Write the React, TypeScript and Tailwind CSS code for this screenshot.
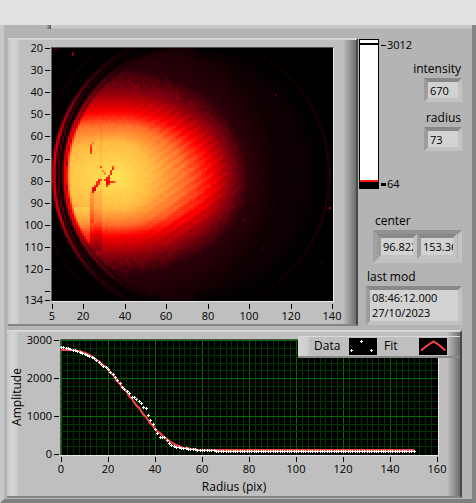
import { useEffect, useRef } from "react";

const COLS = 140;
const ROWS = 126;

const PALETTE: [number, number[]][] = [
  [0, [0, 0, 0]],
  [0.15, [44, 0, 8]],
  [0.3, [130, 0, 14]],
  [0.42, [205, 0, 4]],
  [0.5, [255, 0, 0]],
  [0.7, [255, 112, 42]],
  [0.88, [255, 188, 68]],
  [1, [255, 228, 84]],
];

// level, then the radius of its contour to the right, left, up and down
const CONTOURS = [
  [1, 0, 0, 0, 0],
  [0.88, 105, 190, 105, 90],
  [0.7, 205, 420, 157, 138],
  [0.5, 282, 600, 196, 172],
  [0.3, 345, 800, 262, 235],
  [0.15, 392, 950, 330, 290],
  [0.05, 480, 1300, 480, 420],
  [0.02, 660, 1900, 700, 640],
];

const DEFECTS: [number, number, number][] = [
  [19, 48, 0.68], [19, 49, 0.6], [19, 50, 0.58], [19, 51, 0.56], [19, 52, 0.62], [20, 47, 0.72],
  [24, 59, 0.62], [25, 61, 0.78], [26, 62, 0.78], [30, 59, 0.62], [30, 60, 0.55], [29, 61, 0.6],
  [29, 62, 0.58], [28, 63, 0.62], [27, 64, 0.55], [28, 64, 0.54], [26, 65, 0.62], [27, 65, 0.5],
  [28, 65, 0.56], [27, 66, 0.5], [28, 66, 0.5], [29, 66, 0.56], [30, 66, 0.6], [31, 66, 0.72],
  [27, 67, 0.5], [28, 67, 0.56], [27, 68, 0.62], [23, 65, 0.58], [24, 65, 0.62], [22, 66, 0.62],
  [23, 66, 0.55], [22, 67, 0.55], [23, 67, 0.64], [21, 68, 0.6], [22, 68, 0.52], [20, 69, 0.54],
  [21, 69, 0.47], [20, 70, 0.45], [21, 70, 0.48], [20, 71, 0.52],
  [10, 2, 0.32], [10, 3, 0.3], [1, 0, 0.15], [2, 0, 0.14], [3, 0, 0.12], [1, 1, 0.1],
  [111, 23, 0.22], [138, 79, 0.38], [104, 99, 0.2], [134, 106, 0.17], [95, 85, 0.24],
  [110, 77, 0.14], [130, 121, 0.1],
];

function noise(x: number, y: number) {
  const n = Math.sin(x * 127.1 + y * 311.7) * 43758.5453;
  return n - Math.floor(n) - 0.5;
}

function ring(rho: number, at: number, width: number) {
  return Math.exp(-(((rho - at) / width) ** 2));
}

function beam(x: number, y: number) {
  const dx = x - 200;
  const dy = y - 395;
  const d = Math.hypot(dx, dy) || 1;
  const c = dx / d;
  const s = dy / d;
  let prev = 0;
  for (let i = 1; i < CONTOURS.length; i++) {
    const [level, right, left, up, down] = CONTOURS[i];
    const a = dx > 0 ? right : left;
    const b = dy > 0 ? down : up;
    const r = 1 / Math.hypot(c / a, s / b);
    if (d < r) {
      const before = CONTOURS[i - 1][0];
      return before + ((level - before) * (d - prev)) / (r - prev);
    }
    prev = r;
  }
  return 0.02;
}

function intensity(col: number, row: number) {
  const x = col * 6 + 9;
  const y = row * 6 + 9;
  const rho = Math.hypot((x - 430) / 380, (y - 385) / 385);
  const side = (430 - x) / 380;
  const height = Math.abs(y - 385) / 385;
  let v: number;

  if (rho < 1) {
    v = beam(x, y);
    const stripe = Math.sin((x * 0.58 + y * 0.82) / 3.6);
    if (x > 250 && v > 0.35) v += stripe * 0.024 * Math.min(1, (x - 250) / 120);
    if (v < 0.28) v += (noise(col, row) + noise(col >> 1, row >> 1)) * 0.14 * v;
    else v += noise(col, row) * 0.022;
    if (x < 122 && y > 480 && y < 590) v += 0.08;
    if (y > 430 && y < 610) {
      if (x > 122 && x < 134) v -= y > 530 ? 0.05 : 0.12;
      else if (x >= 134 && x < 155) v -= y > 530 ? 0.07 : 0.05;
    }
    if (x > 150 && x < 157 && y > 240 && y < 440) v -= 0.03;
    v *= Math.min(1, 0.55 + (1 - rho) * 18);
    if (side < 0) v *= Math.min(1, (1.02 - rho) * 7);
  } else {
    const left = Math.max(0, Math.min(1, side * 1.6)) * Math.max(0, Math.min(1, 1.4 - 1.3 * height));
    v =
      left * (0.48 * ring(rho, 1.012, 0.022) + 0.22 * ring(rho, 1.065, 0.01) + 0.44 * ring(rho, 1.1, 0.017)) +
      (side > 0 ? 0.045 * ring(rho, 1.22, 0.014) * side : 0);
  }
  if (side < 0) v += 0.13 * ring(rho, 1.065, 0.011) * Math.max(0, 1.2 - height);
  return Math.max(0, Math.min(1, v));
}

function colour(v: number) {
  for (let i = 1; i < PALETTE.length; i++) {
    const [hi, to] = PALETTE[i];
    const [lo, from] = PALETTE[i - 1];
    if (v <= hi) {
      const t = (v - lo) / (hi - lo);
      return from.map((ch, k) => ch + (to[k] - ch) * t);
    }
  }
  return PALETTE[PALETTE.length - 1][1];
}

function HeatMap() {
  const ref = useRef<HTMLCanvasElement>(null);

  useEffect(() => {
    const ctx = ref.current?.getContext("2d");
    if (!ctx) return;
    const image = ctx.createImageData(COLS, ROWS);
    const put = (col: number, row: number, v: number) => {
      const [r, g, b] = colour(v);
      image.data.set([r, g, b, 255], (row * COLS + col) * 4);
    };
    for (let row = 0; row < ROWS; row++) {
      for (let col = 0; col < COLS; col++) put(col, row, intensity(col, row));
    }
    DEFECTS.forEach(([col, row, v]) => put(col, row, v));
    ctx.putImageData(image, 0, 0);
  }, []);

  return (
    <canvas
      ref={ref}
      width={COLS}
      height={ROWS}
      aria-label="Beam intensity"
      className="block w-full border border-t-[#505050] border-l-[#606060] border-r-[#e8e8e8] border-b-[#e8e8e8] [image-rendering:pixelated]"
    />
  );
}

const Y_TICKS = [
  [20, 48], [30, 70], [40, 92], [50, 114], [60, 136], [70, 159],
  [80, 181], [90, 203], [100, 225], [110, 247], [120, 269], [0, 291], [134, 300],
];
const X_TICKS = [[5, 52], [20, 83], [40, 125], [60, 166], [80, 208], [100, 249], [120, 291], [140, 332]];

function IntensityPanel() {
  return (
    <section className="min-w-0 flex-1 border-t-2 border-r-2 border-b-2 border-t-[#d6d6d6] border-r-[#484848] border-b-[#858585] bg-[linear-gradient(90deg,#c4c4c4_0,#d4d4d4_4px,#d0d0d0_9px,#bfbfbf_12px,#bfbfbf_calc(100%-13px),#6e6e6e_100%)] pr-[22px] pl-3">
      <div className="grid grid-cols-[31px_1fr] pt-[7px]">
        <svg viewBox="20 47 31 254" className="h-[254px] w-[31px] overflow-visible text-[11px]">
          {Y_TICKS.map(([value, y]) => (
            <g key={y}>
              <path d={`M45 ${y + 0.5}h5`} stroke="#000" />
              {value > 0 && (
                <text x="43" y={y + 4} textAnchor="end">
                  {value}
                </text>
              )}
            </g>
          ))}
        </svg>
        <HeatMap />
      </div>
      <svg viewBox="20 301 324 22" className="block h-[22px] w-[324px] overflow-visible text-[11px]">
        {X_TICKS.map(([value, x]) => (
          <g key={x}>
            <path d={`M${x + 0.5} 303v5`} stroke="#000" />
            <text x={x} y="319" textAnchor="middle">
              {value}
            </text>
          </g>
        ))}
      </svg>
    </section>
  );
}

function ScaleBar() {
  return (
    <div className="flex">
      <div className="mt-px flex h-[150px] w-5 flex-col border border-black bg-white">
        <div className="mt-[3px] h-[2px] bg-black" />
        <div className="mt-auto h-[2px] bg-[#ff1a0a]" />
        <div className="h-[6px] bg-black" />
      </div>
      <div className="mt-px flex h-[151px] flex-col justify-between pl-[2px] text-[11px] leading-3">
        <div className="flex items-center gap-px">
          <span className="h-px w-[5px] bg-black" />
          <span>3012</span>
        </div>
        <div className="flex items-center gap-px">
          <span className="h-[3px] w-[5px] bg-black" />
          <span>64</span>
        </div>
      </div>
    </div>
  );
}

const bevel =
  "block border-4 border-t-[#888888] border-l-[#9c9c9c] border-r-[#c3c3c3] border-b-[#c1c1c1] bg-[#d2d2d2] text-[11px] outline-none";

function Readout({ label, value }: { label: string; value: string }) {
  return (
    <label className="flex flex-col text-right">
      <span className="pr-px text-xs leading-[18px]">{label}</span>
      <input readOnly value={value} className={`${bevel} h-6 w-[38px] self-end pl-[2px]`} />
    </label>
  );
}

function Sidebar() {
  return (
    <aside className="flex w-[103px] shrink-0 flex-col">
      <div className="flex justify-between">
        <ScaleBar />
        <div className="-ml-4 flex flex-col gap-[7px] pt-[22px]">
          <Readout label="intensity" value="670" />
          <Readout label="radius" value="73" />
        </div>
      </div>
      <fieldset className="mt-[22px] ml-[14px]">
        <legend className="pl-[2px] text-xs leading-[18px]">center</legend>
        <div className="flex border-4 border-t-[#929292] border-r-[#c3c3c3] border-b-[#c1c1c1] border-l-[#a2a2a2] bg-[#b0b0b0]">
          <input readOnly aria-label="center x" value="96.822" className={`${bevel} h-[25px] w-10 pl-[2px]`} />
          <input readOnly aria-label="center y" value="153.36" className={`${bevel} h-[25px] w-10 pl-[2px]`} />
        </div>
      </fieldset>
      <label className="mt-[5px] ml-[7px] block">
        <span className="block pl-px text-xs leading-[18px]">last mod</span>
        <textarea
          readOnly
          rows={2}
          value={"08:46:12.000\n27/10/2023"}
          className={`${bevel} h-[39px] w-full resize-none overflow-hidden pl-[2px] leading-[15px]`}
        />
      </label>
    </aside>
  );
}

// radius in pixels, amplitude
const FIT = [
  [0, 2750], [5, 2740], [9, 2690], [13, 2570], [17, 2400], [20, 2230], [24, 1930], [28, 1620],
  [32, 1290], [36, 980], [40, 650], [44, 440], [48, 270], [52, 165], [57, 120], [62, 100], [150, 100],
];
const DATA = [
  [0, 2820], [4, 2770], [8, 2690], [11, 2600], [14, 2520], [17, 2360], [20, 2240], [23, 2030],
  [26, 1770], [29, 1610], [30, 1500], [31, 1490], [34, 1350], [35, 1240], [36, 1210], [37, 1030], [39, 780],
  [41, 560], [42, 440], [44, 440], [46, 300], [48, 200], [54, 140], [60, 100], [75, 80], [150, 80],
];

function sample(points: number[][], r: number) {
  const i = Math.max(1, points.findIndex((p) => p[0] >= r));
  const [r0, a0] = points[i - 1];
  const [r1, a1] = points[i];
  return a0 + ((a1 - a0) * (r - r0)) / (r1 - r0);
}

const px = (r: number) => Math.round(61 + r * 2.35);
const py = (a: number) => Math.round(454 - a * 0.038);

function ProfilePanel() {
  const radii = Array.from({ length: 151 }, (_, i) => i);
  return (
    <section className="relative border-t-2 border-r-2 border-b-2 border-t-[#d6d6d6] border-r-[#484848] border-b-[#858585] bg-[linear-gradient(90deg,#c4c4c4_0,#d4d4d4_4px,#d0d0d0_9px,#bfbfbf_12px,#bfbfbf_calc(100%-13px),#6e6e6e_100%)]">
      <svg viewBox="7 332 453 164" className="block w-full text-[11px]">
        <rect x="61" y="340" width="377" height="115" />
        <g shapeRendering="crispEdges">
          {Array.from({ length: 64 }, (_, i) => i).map((i) => (
            <path
              key={i}
              d={`M${Math.round(61 + i * 5.875)}.5 340v115`}
              stroke={i % 8 ? "#003600" : "#006c00"}
            />
          ))}
          {Array.from({ length: 15 }, (_, i) => i).map((i) => (
            <path key={i} d={`M61 ${Math.round(340 + i * 7.6)}.5h377`} stroke={i % 5 ? "#003600" : "#006c00"} />
          ))}
        </g>
        <path d="M60.5 455V339.500H438" fill="none" stroke="#505050" />
        <path d="M60 455.500H438.500V340" fill="none" stroke="#e8e8e8" />
        <polyline
          points={radii.map((r) => `${px(r)},${py(sample(FIT, r))}`).join(" ")}
          fill="none"
          stroke="#ff4444"
          strokeWidth="2"
        />
        <g stroke="#fff" shapeRendering="crispEdges">
          {radii.map((r) => (
            <path key={r} d={`M${px(r) - 1} ${py(sample(DATA, r)) + 0.5}h3m-1.500 -1.500v3`} />
          ))}
        </g>
        {[0, 1000, 2000, 3000].map((value) => (
          <g key={value}>
            <path d={`M54 ${454.5 - value * 0.038}h5`} stroke="#000" />
            <text x="52" y={458 - value * 0.038} textAnchor="end">
              {value}
            </text>
          </g>
        ))}
        {[0, 20, 40, 60, 80, 100, 120, 140, 160].map((value) => (
          <g key={value}>
            <path d={`M${61.5 + Math.round(value * 2.35)} 457v5`} stroke="#000" />
            <text x={61 + value * 2.35} y="473" textAnchor="middle">
              {value}
            </text>
          </g>
        ))}
        <text transform="translate(21 397) rotate(-90)" textAnchor="middle" fontSize="12">
          Amplitude
        </text>
        <text x="234" y="491" textAnchor="middle" fontSize="12">
          Radius (pix)
        </text>
      </svg>

      {/* Legend */}
      <div className="absolute top-1 right-0 flex h-[22px] w-[162px] items-center border-t border-b-2 border-t-[#dadada] border-b-[#8a8a8a] bg-[linear-gradient(90deg,#d4d4d4_0,#d0d0d0_9px,#bfbfbf_12px,#bfbfbf_calc(100%-13px),#6e6e6e_100%)] pl-4 text-xs">
        <span className="w-[35px]">Data</span>
        <svg viewBox="0 0 28 17" className="h-[17px] w-7" shapeRendering="crispEdges">
          <rect width="28" height="17" />
          <path d="M1 12.500h3M2.500 11v3M11 3.500h3M12.500 2v3M21 12.500h3M22.500 11v3" stroke="#fff" />
        </svg>
        <span className="w-[42px] pl-[7px]">Fit</span>
        <svg viewBox="0 0 28 17" className="h-[17px] w-7">
          <rect width="28" height="17" />
          <path d="M2 12.500 9 7 14.500 3.500 20 7 26.500 12.500" fill="none" stroke="#ff4444" strokeWidth="2" />
        </svg>
      </div>
    </section>
  );
}

export default function App() {
  return (
    <div className="flex min-h-screen flex-col bg-[#b4b4b4] font-['Open_Sans','Noto_Sans',sans-serif] text-black">
      <div className="h-[25px] bg-[#e2e2e2]" />
      <main className="flex flex-1 flex-col border-r-4 border-b-4 border-l-4 border-r-[#858585] border-b-[#808080] border-l-[#c8c8c8]">
        <div className="flex h-[13px] items-start">
          <div className="h-1 w-[47px] bg-[linear-gradient(90deg,#b4b4b4_90%,#555555_100%)]" />
          <div className="h-1 flex-1 border-b border-b-[#bdbdbd] bg-[#c9c9c9]" />
        </div>
        <div className="flex items-start gap-px pr-[10px] pl-1">
          <IntensityPanel />
          <Sidebar />
        </div>
        <div className="mt-1 pr-[10px] pl-[3px]">
          <ProfilePanel />
        </div>
      </main>
    </div>
  );
}
